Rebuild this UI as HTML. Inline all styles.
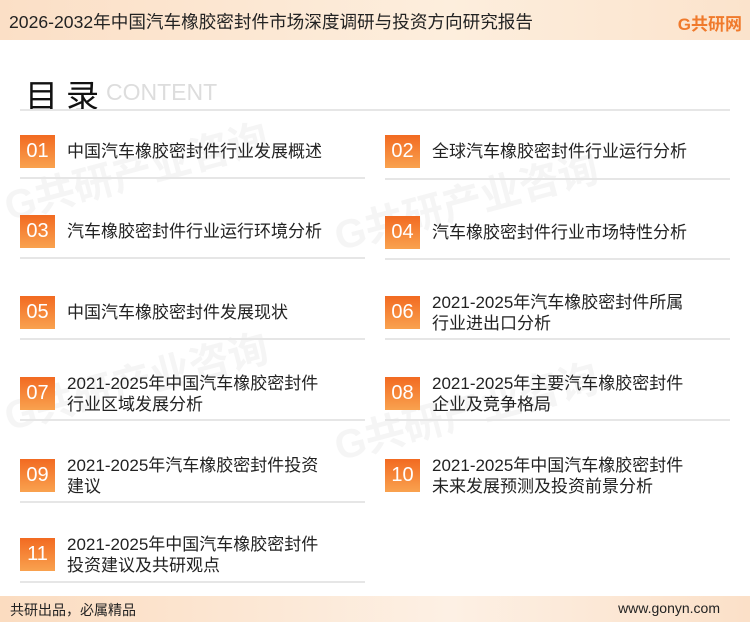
<!DOCTYPE html>
<html><head><meta charset="utf-8"><style>
*{margin:0;padding:0;box-sizing:border-box}
body{width:750px;height:622px;position:relative;background:#fff;font-family:"Liberation Sans","Noto Sans CJK SC",sans-serif;overflow:hidden;color:#222}
.hdr{position:absolute;left:0;top:0;width:750px;height:40px;background:linear-gradient(90deg,#fbdfc6,#fdeedd 60%,#fbe3cc)}
.hdr .t{position:absolute;left:9px;top:9px;font-size:17.6px;color:#222}
.logo{position:absolute;right:8px;top:10px;font-size:17px;font-weight:bold;color:#f07a2c}
.ftr{position:absolute;left:0;top:596px;width:750px;height:26px;background:linear-gradient(90deg,#fbdcc0,#fdf0e4 60%,#fbe0c8)}
.ftr .a{position:absolute;left:10px;top:4px;font-size:14px}
.ftr .b{position:absolute;right:30px;top:4px;font-size:14px}
.ttl{position:absolute;left:25px;top:70px;font-size:33px;letter-spacing:8px;color:#111}
.cnt{position:absolute;left:106px;top:79px;font-size:23px;color:#ddd}
.ln{position:absolute;left:20px;top:109px;width:710px;height:2px;background:#e6e6e6}
.it{position:absolute;width:345px}
.bx{position:absolute;left:0;width:35px;height:33px;background:linear-gradient(180deg,#f26a21,#f9a24f);color:#fff;font-size:20px;text-align:center;line-height:33px}
.tx{position:absolute;left:47px;font-size:17px;line-height:21px;color:#222}
.dv{position:absolute;left:0;width:345px;height:2px;background:#e6e6e6}
.wm{position:absolute;color:#f5f5f5;font-size:40px;font-weight:bold;transform:rotate(-15deg);white-space:nowrap}
</style></head><body>
<div class="wm" style="left:0;top:140px">G共研产业咨询</div>
<div class="wm" style="left:330px;top:170px">G共研产业咨询</div>
<div class="wm" style="left:0;top:350px">G共研产业咨询</div>
<div class="wm" style="left:330px;top:380px">G共研产业咨询</div>
<div class="hdr"><div class="t">2026-2032年中国汽车橡胶密封件市场深度调研与投资方向研究报告</div><div class="logo">G共研网</div></div>
<div class="ttl">目录</div><div class="cnt">CONTENT</div>
<div class="ln"></div>

<div class="it" style="left:20px;top:135px"><div class="bx" style="top:0">01</div><div class="tx" style="top:6px">中国汽车橡胶密封件行业发展概述</div><div class="dv" style="top:42px"></div></div>
<div class="it" style="left:385px;top:135px"><div class="bx" style="top:0">02</div><div class="tx" style="top:6px">全球汽车橡胶密封件行业运行分析</div><div class="dv" style="top:43px"></div></div>

<div class="it" style="left:20px;top:215px"><div class="bx" style="top:0">03</div><div class="tx" style="top:6px">汽车橡胶密封件行业运行环境分析</div><div class="dv" style="top:42px"></div></div>
<div class="it" style="left:385px;top:216px"><div class="bx" style="top:0">04</div><div class="tx" style="top:6px">汽车橡胶密封件行业市场特性分析</div><div class="dv" style="top:42px"></div></div>

<div class="it" style="left:20px;top:296px"><div class="bx" style="top:0">05</div><div class="tx" style="top:6px">中国汽车橡胶密封件发展现状</div><div class="dv" style="top:42px"></div></div>
<div class="it" style="left:385px;top:296px"><div class="bx" style="top:0">06</div><div class="tx" style="top:-4px">2021-2025年汽车橡胶密封件所属<br>行业进出口分析</div><div class="dv" style="top:42px"></div></div>

<div class="it" style="left:20px;top:377px"><div class="bx" style="top:0">07</div><div class="tx" style="top:-4px">2021-2025年中国汽车橡胶密封件<br>行业区域发展分析</div><div class="dv" style="top:42px"></div></div>
<div class="it" style="left:385px;top:377px"><div class="bx" style="top:0">08</div><div class="tx" style="top:-4px">2021-2025年主要汽车橡胶密封件<br>企业及竞争格局</div><div class="dv" style="top:42px"></div></div>

<div class="it" style="left:20px;top:459px"><div class="bx" style="top:0">09</div><div class="tx" style="top:-4px">2021-2025年汽车橡胶密封件投资<br>建议</div><div class="dv" style="top:42px"></div></div>
<div class="it" style="left:385px;top:459px"><div class="bx" style="top:0">10</div><div class="tx" style="top:-4px">2021-2025年中国汽车橡胶密封件<br>未来发展预测及投资前景分析</div></div>

<div class="it" style="left:20px;top:538px"><div class="bx" style="top:0">11</div><div class="tx" style="top:-4px">2021-2025年中国汽车橡胶密封件<br>投资建议及共研观点</div><div class="dv" style="top:43px"></div></div>

<div class="ftr"><div class="a">共研出品，必属精品</div><div class="b">www.gonyn.com</div></div>
</body></html>
